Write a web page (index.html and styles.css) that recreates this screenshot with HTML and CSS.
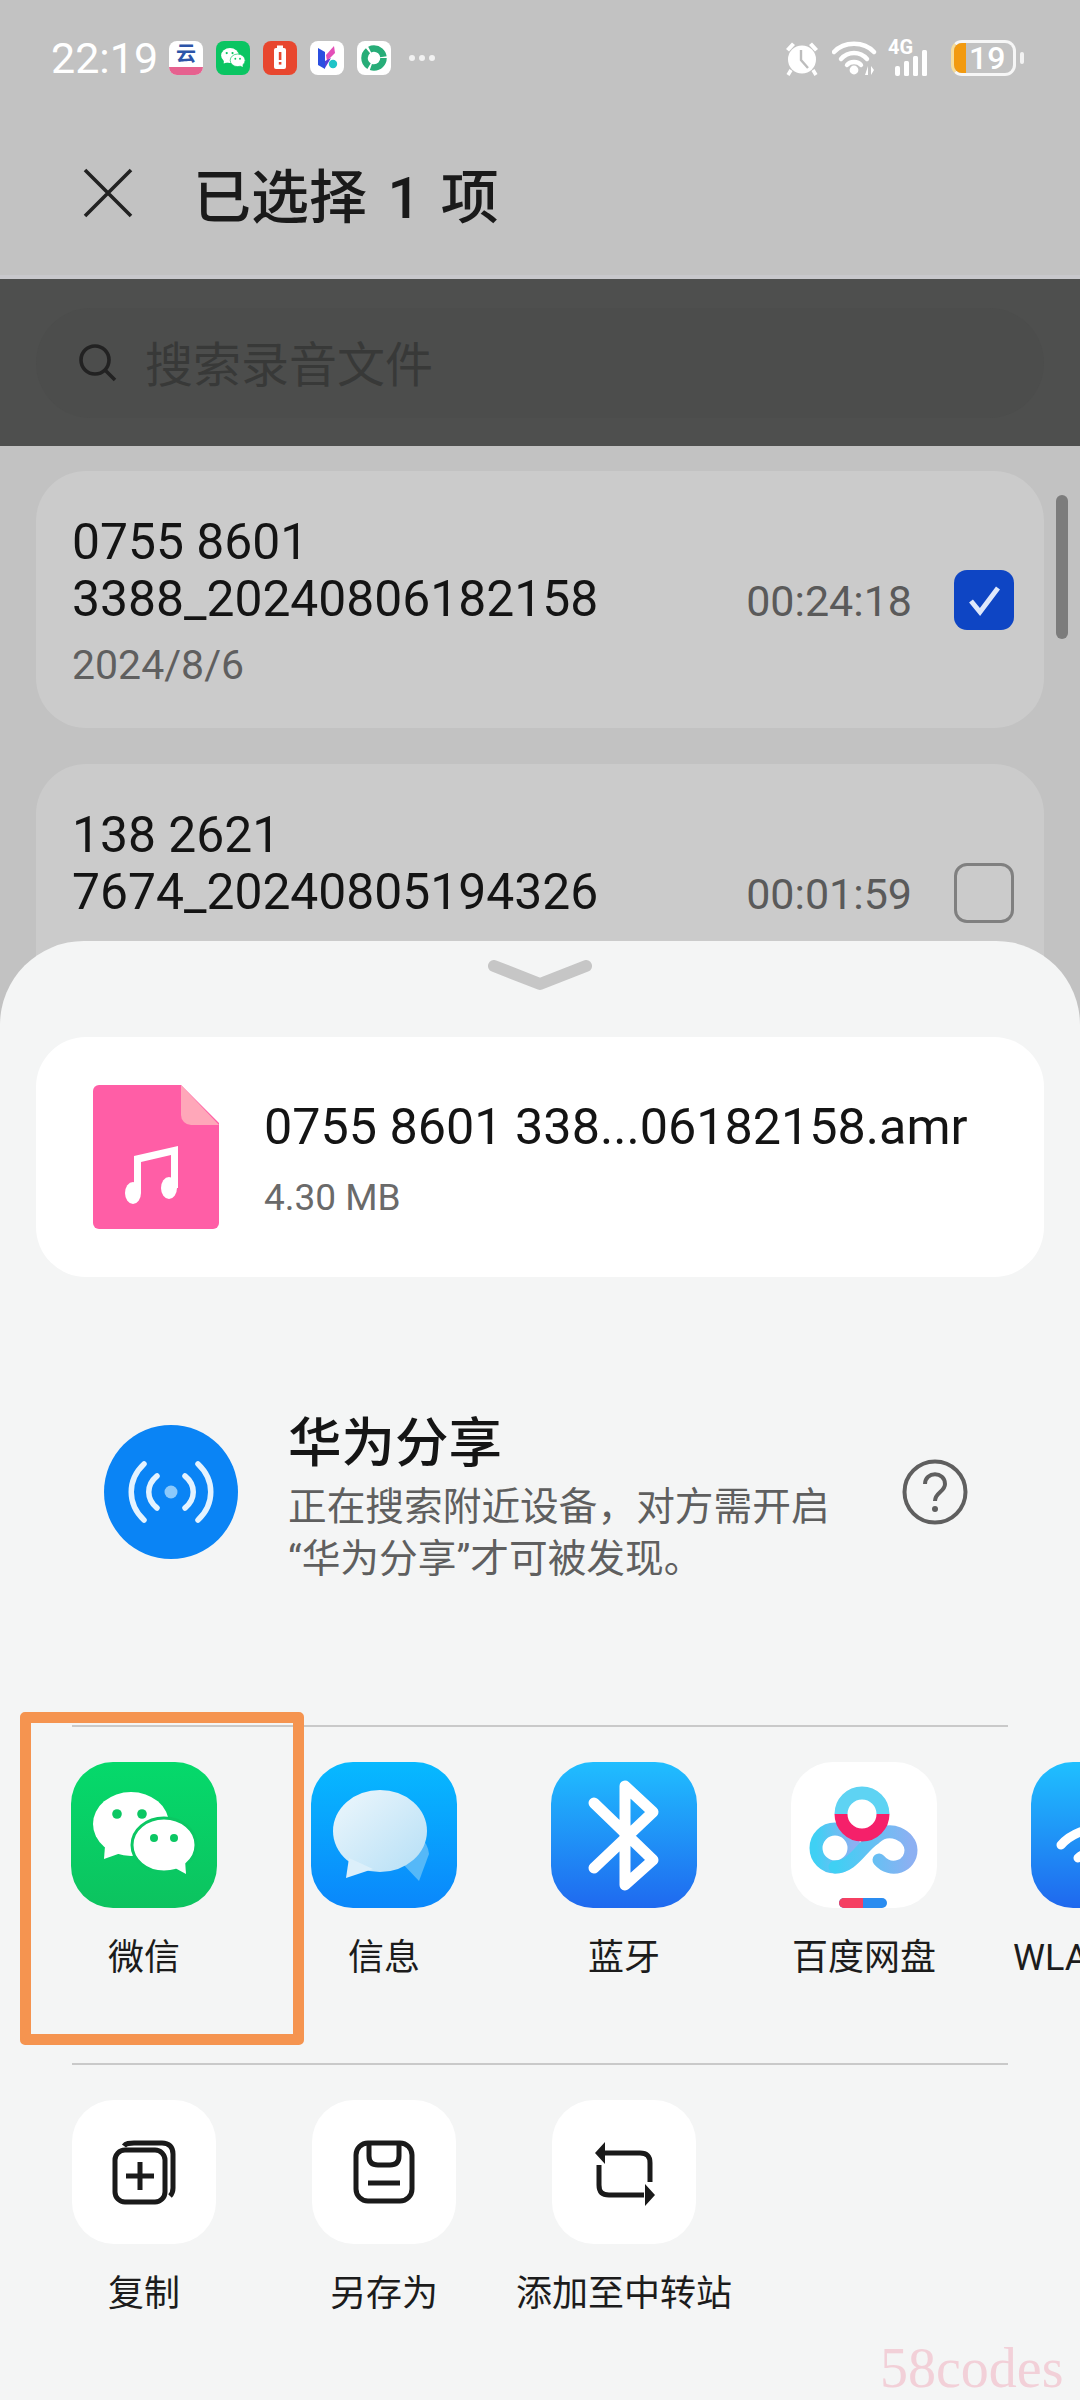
FILE: index.html
```html
<!DOCTYPE html>
<html lang="zh-CN">
<head>
    <meta charset="UTF-8">
    <meta name="viewport" content="width=device-width, initial-scale=1.0">
    <title>已选择 1 项</title>
    <link rel="stylesheet" href="styles.css">
</head>
<body>
<div class="screen">
    <svg class="defs" width="0" height="0">
        <symbol id="wechat" viewBox="0 0 146 146">
            <ellipse cx="60" cy="62" rx="38" ry="32" fill="#fff"/>
            <path d="M34 84 L33 97 L50 91 Z" fill="#fff"/>
            <circle cx="46" cy="52" r="4.8" fill="#0bc763"/>
            <circle cx="71" cy="52" r="4.8" fill="#0bc763"/>
            <ellipse cx="93" cy="83" rx="32" ry="27" fill="#fff" stroke="#0bc763" stroke-width="3"/>
            <path d="M104 106 L115 112 L114 98 Z" fill="#fff"/>
            <circle cx="83" cy="76" r="4" fill="#0bc763"/>
            <circle cx="103" cy="76" r="4" fill="#0bc763"/>
        </symbol>
    </svg>

    <!-- Status bar -->
    <div class="status-bar">
        <span class="clock">22:19</span>
        <div class="notif-icons">
            <div class="notif notif-cloud"><span class="cloud-char">云</span><span class="cloud-band"></span></div>
            <div class="notif notif-green"><svg viewBox="0 0 146 146" width="34" height="34"><use href="#wechat"/></svg></div>
            <div class="notif notif-red"><svg viewBox="0 0 34 34" width="34" height="34"><rect x="11" y="7" width="12" height="21" rx="2" fill="#fff"/><rect x="14" y="4.5" width="6" height="3" fill="#fff"/><rect x="15.8" y="11" width="2.6" height="8" fill="#e8472f"/><rect x="15.8" y="21" width="2.6" height="2.6" fill="#e8472f"/></svg></div>
            <div class="notif notif-white"><svg viewBox="0 0 34 34" width="34" height="34"><path d="M8 7 L15 11 V28 L8 24 Z" fill="#2b4fe0"/><path d="M16 14 L24 5 L25 12 L17 20 Z" fill="#e34fb8"/><path d="M15 20 L21 17 L15 27 Z" fill="#5a3fd8"/><circle cx="23" cy="23" r="4.2" fill="#1fc4c8"/></svg></div>
            <div class="notif notif-white"><svg viewBox="0 0 34 34" width="34" height="34"><circle cx="17" cy="17" r="9.5" fill="none" stroke="#27ad78" stroke-width="6.5" stroke-dasharray="18 2"/></svg></div>
        </div>
        <span class="more-dots"><i></i><i></i><i></i></span>
        <div class="status-right">
            <svg class="ic-alarm" width="36" height="36" viewBox="0 0 36 36">
                <path d="M2 9 L8 2.5 L11 5 L5 11.5 Z M34 9 L28 2.5 L25 5 L31 11.5 Z" fill="#fff"/>
                <circle cx="18" cy="19.5" r="14" fill="#fff"/>
                <path d="M17 10 V20 L24 28" fill="none" stroke="#bdbdbd" stroke-width="2.4"/>
                <path d="M7 30 L4 35 M29 30 L32 35" stroke="#fff" stroke-width="3.5"/>
            </svg>
            <svg class="ic-wifi" width="46" height="36" viewBox="0 0 46 36">
                <g fill="none" stroke="#fff" stroke-width="4.4" stroke-linecap="round">
                    <path d="M2 12 C12 1 32 1 42 12"/>
                    <path d="M9 19 C16 11 28 11 35 19"/>
                    <path d="M15 25 C18 21 26 21 29 25"/>
                </g>
                <circle cx="22" cy="30" r="4.4" fill="#fff"/>
                <path d="M33 35 L36 26 V35 Z M39 26 L42 30 L39 35 Z" fill="#fff"/>
            </svg>
            <div class="signal">
                <span class="signal-label">4G</span>
                <svg width="36" height="26" viewBox="0 0 36 26">
                    <rect x="0" y="16" width="5" height="10" rx="2" fill="#fff"/>
                    <rect x="9" y="11" width="5" height="15" rx="1.5" fill="#fff"/>
                    <rect x="18" y="6" width="5" height="20" rx="1.5" fill="#fff"/>
                    <rect x="27" y="0" width="5" height="26" rx="1.5" fill="#fff"/>
                </svg>
            </div>
            <div class="battery">
                <div class="battery-body"><span class="battery-fill"></span><span class="battery-num">19</span></div>
                <span class="battery-nub"></span>
            </div>
        </div>
    </div>

    <!-- Title -->
    <div class="title-bar">
        <svg class="close-ic" width="50" height="50" viewBox="0 0 50 50"><path d="M2 2 L48 48 M48 2 L2 48" stroke="#222" stroke-width="3.6" fill="none"/></svg>
        <h1 class="page-title">已选择 1 项</h1>
    </div>

    <!-- Search -->
    <div class="search-band">
        <div class="search-box">
            <svg width="40" height="40" viewBox="0 0 40 40"><circle cx="17" cy="17" r="14" fill="none" stroke="#222" stroke-width="3.6"/><path d="M27 27 L37 37" stroke="#222" stroke-width="3.6"/></svg>
            <span class="search-text">搜索录音文件</span>
        </div>
    </div>

    <!-- Recordings -->
    <div class="rec-list">
        <div class="rec-card">
            <div class="rec-info">
                <div class="rec-name">0755 8601<br>3388_20240806182158</div>
                <div class="rec-date">2024/8/6</div>
            </div>
            <span class="rec-time">00:24:18</span>
            <span class="check check-on"><svg width="40" height="40" viewBox="0 0 40 40"><path d="M7 21 L16 32 L34 8" fill="none" stroke="#dfe8fb" stroke-width="5"/></svg></span>
        </div>
        <div class="rec-card">
            <div class="rec-info">
                <div class="rec-name">138 2621<br>7674_20240805194326</div>
                <div class="rec-date">2024/8/5</div>
            </div>
            <span class="rec-time">00:01:59</span>
            <span class="check"></span>
        </div>
    </div>
    <div class="scroll-thumb"></div>

    <!-- Share sheet -->
    <div class="sheet">
        <div class="sheet-handle">
            <svg width="104" height="32" viewBox="0 0 104 32"><path d="M6 6 L52 24 L98 6" fill="none" stroke="#c6c6c6" stroke-width="12" stroke-linecap="round" stroke-linejoin="round"/></svg>
        </div>

        <div class="file-card">
            <svg class="file-ic" width="126" height="144" viewBox="0 0 126 144">
                <path d="M6 0 H88 L126 38 V138 a6 6 0 0 1 -6 6 H6 a6 6 0 0 1 -6 -6 V6 a6 6 0 0 1 6 -6 Z" fill="#ff5ea6"/>
                <path d="M88 0 L126 40 H98 a10 10 0 0 1 -10 -10 Z" fill="#ffa7b9"/>
                <g fill="#fff">
                    <ellipse cx="40" cy="108" rx="8" ry="11"/>
                    <ellipse cx="76" cy="103" rx="8" ry="11"/>
                    <path d="M41 108 H48 V77 L78 70 V103 H85 V61 L41 71 Z"/>
                </g>
            </svg>
            <div class="file-info">
                <div class="file-name">0755 8601 338...06182158.amr</div>
                <div class="file-size">4.30 MB</div>
            </div>
        </div>

        <div class="huawei-share">
            <svg class="share-ic" width="134" height="134" viewBox="0 0 134 134">
                <circle cx="67" cy="67" r="67" fill="#0a84f5"/>
                <circle cx="67" cy="67" r="6.5" fill="#8cc9fb"/>
                <g fill="none" stroke="#e4f3ff" stroke-width="5.5" stroke-linecap="round">
                    <path d="M53 51 C42 60 42 74 53 83"/>
                    <path d="M81 51 C92 60 92 74 81 83"/>
                    <path d="M40 39 C23 55 23 79 40 95"/>
                    <path d="M94 39 C111 55 111 79 94 95"/>
                </g>
            </svg>
            <div class="share-text">
                <div class="share-title">华为分享</div>
                <div class="share-desc">正在搜索附近设备，对方需开启<br>“华为分享”才可被发现。</div>
            </div>
            <svg class="help-ic" width="66" height="66" viewBox="0 0 66 66">
                <circle cx="33" cy="33" r="30.5" fill="none" stroke="#5f5f5f" stroke-width="4"/>
                <path d="M23 25 C23 12 43 12 43 25 C43 33 33 33 33 42" fill="none" stroke="#5f5f5f" stroke-width="4"/>
                <circle cx="33" cy="50" r="3" fill="#5f5f5f"/>
            </svg>
        </div>

        <!-- Apps -->
        <div class="tile-row apps-row">
            <div class="tile">
                <div class="app-ic ic-wechat"><svg viewBox="0 0 146 146" width="146" height="146"><use href="#wechat"/></svg></div>
                <span class="tile-label">微信</span>
            </div>
            <div class="tile">
                <div class="app-ic ic-msg">
                    <svg width="146" height="146" viewBox="0 0 146 146">
                        <defs><linearGradient id="bubble" x1="0" y1="0" x2="1" y2="1"><stop offset="0" stop-color="#eef7fc"/><stop offset="1" stop-color="#b5dff6"/></linearGradient></defs>
                        <path d="M90 100 L108 119 L118 92 A24 24 0 0 0 90 70 Z" fill="#55b8f8"/>
                        <ellipse cx="69" cy="69" rx="47" ry="41" fill="url(#bubble)"/>
                        <path d="M38 96 L35 116 L62 107 Z" fill="#dceffa"/>
                    </svg>
                </div>
                <span class="tile-label">信息</span>
            </div>
            <div class="tile">
                <div class="app-ic ic-bt">
                    <svg width="146" height="146" viewBox="0 0 146 146"><path d="M43 41 L102 98 L74 123 V24 L102 50 L43 106" fill="none" stroke="#fff" stroke-width="11" stroke-linecap="round" stroke-linejoin="round"/></svg>
                </div>
                <span class="tile-label">蓝牙</span>
            </div>
            <div class="tile">
                <div class="app-ic ic-baidu">
                    <svg width="146" height="146" viewBox="0 0 146 146">
                        <defs><linearGradient id="bd" x1="0" y1="0" x2="1" y2="0"><stop offset="0" stop-color="#3fd0f4"/><stop offset="1" stop-color="#8cb0f2"/></linearGradient></defs>
                        <circle cx="44" cy="86" r="19" fill="none" stroke="url(#bd)" stroke-width="13"/>
                        <path d="M44 105 C62 105 70 85 84 76 C98 62 120 74 120 88 C120 104 100 112 88 98" fill="none" stroke="url(#bd)" stroke-width="13" stroke-linecap="round"/>
                        <path d="M50 52 A21 21 0 0 1 92 52" fill="none" stroke="#5ed3f3" stroke-width="13"/>
                        <path d="M50 52 A21 21 0 0 0 92 52" fill="none" stroke="#f5206a" stroke-width="13"/>
                        <rect x="48" y="136" width="48" height="10" rx="5" fill="#2a8cf0"/>
                        <path d="M53 136 H72 V146 H53 a5 5 0 0 1 0 -10 Z" fill="#f53f62"/>
                    </svg>
                </div>
                <span class="tile-label">百度网盘</span>
            </div>
            <div class="tile">
                <div class="app-ic ic-wlan">
                    <svg width="146" height="146" viewBox="0 0 146 146"><path d="M30 83 C50 60 96 60 116 83" fill="none" stroke="#fff" stroke-width="9" stroke-linecap="round"/><path d="M47 96 C62 84 84 84 99 96" fill="none" stroke="#fff" stroke-width="9" stroke-linecap="round"/></svg>
                </div>
                <span class="tile-label">WLAN 直连</span>
            </div>
        </div>

        <!-- Actions -->
        <div class="tile-row actions-row">
            <div class="tile">
                <div class="action-ic">
                    <svg width="144" height="144" viewBox="0 0 144 144">
                        <g fill="none" stroke="#1a1a1a" stroke-width="5">
                            <rect x="43" y="50" width="50" height="52" rx="10"/>
                            <path d="M52 46 C54 43 57 43 62 43 H90 C97 43 101 47 101 54 V88 C101 92 100 94 98 96"/>
                            <path d="M68 62 V90 M54 76 H82"/>
                        </g>
                    </svg>
                </div>
                <span class="tile-label">复制</span>
            </div>
            <div class="tile">
                <div class="action-ic">
                    <svg width="144" height="144" viewBox="0 0 144 144">
                        <g fill="none" stroke="#1a1a1a" stroke-width="5">
                            <rect x="44" y="43" width="56" height="58" rx="12"/>
                            <path d="M57 44 V56 C57 62 60 65 66 65 H78 C84 65 87 62 87 56 V44"/>
                            <path d="M56 83 H88"/>
                        </g>
                    </svg>
                </div>
                <span class="tile-label">另存为</span>
            </div>
            <div class="tile">
                <div class="action-ic">
                    <svg width="144" height="144" viewBox="0 0 144 144">
                        <g fill="none" stroke="#1a1a1a" stroke-width="5">
                            <path d="M52 53 H88 C95 53 98 56 98 63 V82"/>
                            <path d="M47 65 V85 C47 92 50 95 57 95 H92"/>
                        </g>
                        <path d="M53 42 L43 53 L53 64 Z M93 84 L103 95 L93 106 Z" fill="#1a1a1a"/>
                    </svg>
                </div>
                <span class="tile-label">添加至中转站</span>
            </div>
        </div>

        <div class="highlight-box"></div>
    </div>

    <span class="watermark">58codes</span>
</div>
</body>
</html>
```

FILE: styles.css
```css
* {
    box-sizing: border-box;
}

html, body {
    margin: 0;
    padding: 0;
}

body {
    font-family: Roboto, "Noto Sans CJK SC", sans-serif;
    color: #111;
    background-color: #c2c2c2;
}

.screen {
    position: relative;
    width: 1080px;
    height: 2400px;
    overflow: hidden;
    background-color: #c2c2c2;
}

.defs {
    position: absolute;
}

/* status bar */
.status-bar {
    display: flex;
    align-items: center;
    height: 116px;
    padding: 0 56px 0 51px;
}

.clock {
    font-size: 43px;
    color: #fff;
    width: 118px;
}

.notif-icons {
    display: flex;
    gap: 13px;
}

.notif {
    position: relative;
    width: 34px;
    height: 34px;
    border-radius: 8px;
    overflow: hidden;
    display: flex;
}

.notif-cloud {
    background-color: #fff;
    justify-content: center;
}

.cloud-char {
    font-size: 20px;
    line-height: 26px;
    font-weight: 700;
    color: #2c54a8;
}

.cloud-band {
    position: absolute;
    left: 0;
    right: 0;
    bottom: 0;
    height: 8px;
    background-color: #e6618f;
}

.notif-green {
    background-color: #0ac562;
}

.notif-red {
    background-color: #e8472f;
}

.notif-white {
    background-color: #fff;
}

.more-dots {
    display: flex;
    gap: 4px;
    margin-left: 18px;
}

.more-dots i {
    width: 6px;
    height: 6px;
    border-radius: 50%;
    background-color: #f1f1f1;
}

.status-right {
    display: flex;
    align-items: center;
    margin-left: auto;
}

.ic-alarm {
    margin-right: 12px;
}

.ic-wifi {
    margin-right: 10px;
}

.signal {
    position: relative;
    width: 43px;
    height: 36px;
    margin-right: 20px;
    display: flex;
    align-items: flex-end;
    justify-content: flex-end;
}

.signal-label {
    position: absolute;
    left: 0;
    top: -3px;
    font-size: 20px;
    line-height: 20px;
    font-weight: 700;
    color: #fff;
}

.battery {
    display: flex;
    align-items: center;
    gap: 4px;
}

.battery-body {
    display: flex;
    align-items: center;
    width: 65px;
    height: 36px;
    border: 3px solid #f6f6f6;
    border-left-color: #f6dd9c;
    border-radius: 11px;
}

.battery-fill {
    width: 12px;
    height: 100%;
    border-radius: 8px 0 0 8px;
    background-color: #f29a10;
}

.battery-num {
    margin-left: 3px;
    font-size: 32px;
    font-weight: 500;
    line-height: 30px;
    color: #fff;
}

.battery-nub {
    width: 4px;
    height: 12px;
    border-radius: 2px;
    background-color: #f2f2f2;
}

/* title */
.title-bar {
    display: flex;
    align-items: center;
    height: 163px;
    padding: 0 0 6px 83px;
    border-bottom: 4px solid #c8c8cc;
}

.page-title {
    margin: 0 0 0 60px;
    font-size: 58px;
    font-weight: 500;
    word-spacing: 6px;
    color: #1a1a1a;
}

/* search */
.search-band {
    height: 167px;
    padding: 29px 36px 0;
    background-color: #4e4f4e;
}

.search-box {
    display: flex;
    align-items: center;
    height: 110px;
    padding-left: 42px;
    border-radius: 55px;
    background-color: #4c4d4c;
}

.search-text {
    margin-left: 27px;
    padding-bottom: 5px;
    font-size: 48px;
    color: #383938;
}

/* recordings */
.rec-list {
    display: flex;
    flex-direction: column;
    gap: 36px;
    padding: 25px 36px 0;
}

.rec-card {
    display: flex;
    align-items: center;
    height: 257px;
    padding: 0 30px 0 36px;
    border-radius: 50px;
    background-color: #cbcbcb;
}

.rec-info {
    flex: 1;
    padding-top: 4px;
}

.rec-name {
    font-size: 49.8px;
    line-height: 57px;
    color: #141414;
}

.rec-date {
    margin-top: 13px;
    font-size: 41px;
    line-height: 48px;
    color: #5f5f5f;
}

.rec-time {
    margin-right: 42px;
    padding-top: 2px;
    font-size: 43px;
    color: #5a5a5a;
}

.check {
    display: flex;
    align-items: center;
    justify-content: center;
    width: 60px;
    height: 60px;
    border: 3px solid #808080;
    border-radius: 13px;
}

.check-on {
    border: none;
    background-color: #0e45c4;
}

.scroll-thumb {
    position: absolute;
    left: 1056px;
    top: 495px;
    width: 12px;
    height: 144px;
    border-radius: 6px;
    background-color: #7c7c7c;
}

/* share sheet */
.sheet {
    position: absolute;
    left: 0;
    right: 0;
    top: 941px;
    bottom: 0;
    overflow: hidden;
    border-radius: 84px 84px 0 0;
    background-color: #f4f5f5;
}

.sheet-handle {
    display: flex;
    justify-content: center;
    height: 96px;
    padding-top: 19px;
}

.file-card {
    display: flex;
    align-items: center;
    height: 240px;
    margin: 0 36px;
    padding-left: 57px;
    border-radius: 50px;
    background-color: #fff;
}

.file-info {
    margin-left: 45px;
    padding-top: 5px;
}

.file-name {
    font-size: 50.3px;
    line-height: 56px;
    color: #141414;
}

.file-size {
    margin-top: 21px;
    font-size: 37px;
    line-height: 44px;
    color: #6a6a6a;
}

.huawei-share {
    display: flex;
    align-items: center;
    height: 448px;
    padding: 0 0 18px 104px;
}

.share-text {
    margin-left: 50px;
    width: 614px;
    padding-top: 12px;
}

.share-title {
    font-size: 53.5px;
    line-height: 64px;
    font-weight: 500;
    color: #151515;
}

.share-desc {
    margin-top: 5px;
    font-size: 38.7px;
    line-height: 52px;
    color: #5f5f5f;
}

.tile-row {
    display: flex;
    padding-left: 24px;
    padding-top: 37px;
    position: relative;
}

.tile-row::before {
    content: "";
    position: absolute;
    left: 72px;
    top: 0;
    width: 936px;
    height: 2px;
    background-color: #c9c9c9;
}

.apps-row {
    height: 338px;
}

.tile {
    display: flex;
    flex: none;
    flex-direction: column;
    align-items: center;
    width: 240px;
}

.app-ic {
    width: 146px;
    height: 146px;
    border-radius: 42px;
    overflow: hidden;
    flex: none;
}

.ic-wechat {
    background: linear-gradient(#05d96b, #0cc35f);
}

.ic-msg {
    background: linear-gradient(#07b9ff, #0a87fb);
}

.ic-bt {
    background: linear-gradient(#20beff, #1f69ef);
}

.ic-baidu {
    background-color: #fff;
}

.ic-wlan {
    background: linear-gradient(#1fc0ff, #1f68ee);
}

.tile-label {
    margin-top: 25px;
    font-size: 36px;
    line-height: 50px;
    white-space: nowrap;
    color: #1c1c1c;
}

.action-ic {
    width: 144px;
    height: 144px;
    border-radius: 42px;
    background-color: #fff;
}

.highlight-box {
    position: absolute;
    left: 20px;
    top: 771px;
    width: 284px;
    height: 333px;
    border: 11px solid #f59450;
    border-radius: 5px;
}

.watermark {
    position: absolute;
    left: 880px;
    top: 2336px;
    font-family: "Liberation Serif", serif;
    font-size: 56px;
    line-height: 64px;
    color: #f2d0d8;
}
```
